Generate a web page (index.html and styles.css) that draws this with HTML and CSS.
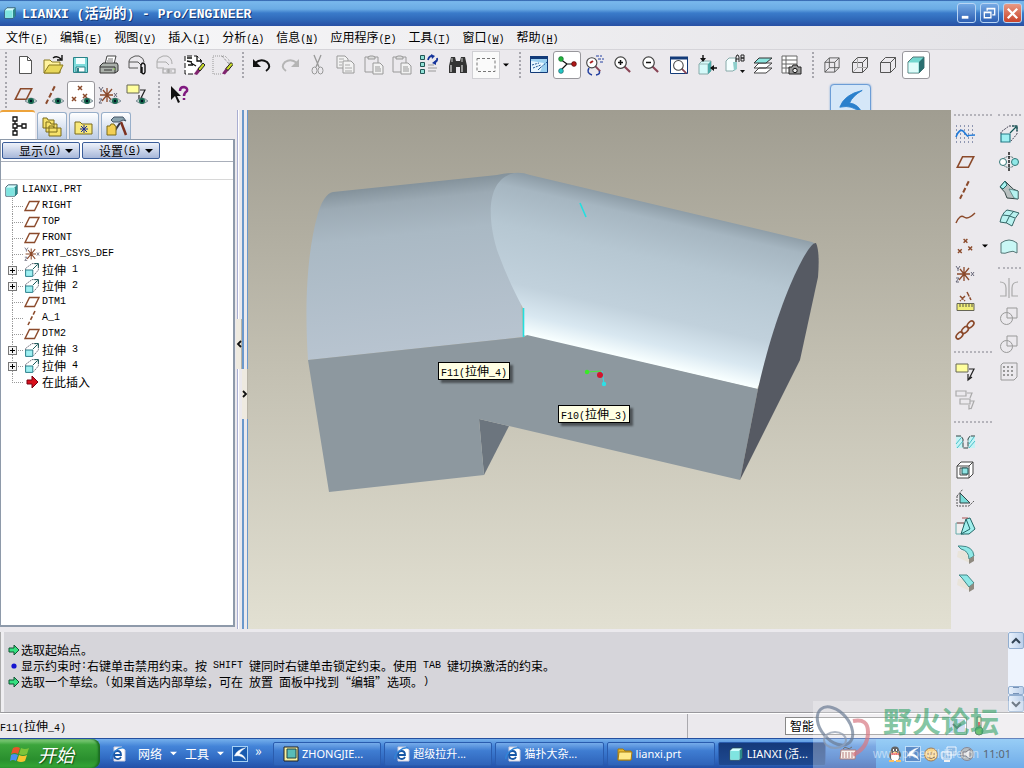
FILE: index.html
```html
<!DOCTYPE html>
<html lang="zh-CN">
<head>
    <meta charset="UTF-8">
    <meta name="viewport" content="width=device-width, initial-scale=1.0">
    <title>LIANXI (活动的) - Pro/ENGINEER</title>
    <link rel="stylesheet" href="styles.css">
</head>
<body>
    <!-- shared icons -->
    <svg class="sprite">
        <symbol id="eye" viewBox="0 0 12 8"><path d="M0 4Q6-2 12 4Q6 9 0 4z" fill="#b9cfc8" stroke="#567" stroke-width=".6"/><circle cx="6" cy="4" r="3" fill="#17694f"/><circle cx="6" cy="4" r="1.2" fill="#012"/></symbol>
        <symbol id="plane" viewBox="0 0 16 12"><path d="M5.500 1.500H15L10.500 10.500H1z" fill="none" stroke="#8b4a2b" stroke-width="1.400"/></symbol>
        <symbol id="axis" viewBox="0 0 16 16"><path d="M11 1L4 15" stroke="#8b4a2b" stroke-width="1.600" stroke-dasharray="4 2"/></symbol>
        <symbol id="points" viewBox="0 0 20 18"><path d="M8 1l4 4m0-4l-4 4M13 9l4 4m0-4l-4 4M2 12l4 4m0-4l-4 4" stroke="#8b4a2b" stroke-width="1.500"/></symbol>
        <symbol id="csys" viewBox="0 0 20 18"><path d="M2 9h13M4 15L14 3M5 4l9 11M9 2v14" stroke="#8b4a2b" stroke-width="1.300" fill="none"/><path d="M1 1l2 3 2-3M3 4v2M16 7l3 4m0-4l-3 4M1 13h3l-3 4h3" stroke="#667" fill="none"/></symbol>
        <symbol id="extrude" viewBox="0 0 20 20"><path d="M2 10V8L10 2h8v8l-6 7" fill="none" stroke="#445" stroke-dasharray="2 1"/><path d="M11 9l6-6M13 2h5v5" fill="none" stroke="#155" stroke-width="1.200"/><path d="M2 10h9v8H2z" fill="#9ff0f2" stroke="#257a86" stroke-width="1.200"/></symbol>
        <symbol id="cube" viewBox="0 0 16 16"><path d="M1 4l3-3h11v11l-3 3H1z" fill="#d4ffff" stroke="#245"/><path d="M1.500 4.500h10v10h-10z" fill="#7fe4e0"/><path d="M12 4l3-3v11l-3 3z" fill="#2b8b8b"/></symbol>
        <symbol id="tag" viewBox="0 0 20 20"><path d="M1 1h12v8H1z" fill="#ffff9d" stroke="#665"/><path d="M14 6h5l-5 10M13 11v6l4-3" fill="none" stroke="#222" stroke-width="1.200"/></symbol>
        <symbol id="box" viewBox="0 0 18 18"><path d="M1 6h11v11H1zM6 1h11v11H6zM1 6l5-5M12 6l5-5M12 17l5-5M1 17l5-5" fill="none" stroke="#555"/></symbol>
        <symbol id="glass" viewBox="0 0 20 20"><path d="M12 12l6 6" stroke="#845" stroke-width="2.200"/><circle cx="8" cy="8" r="6" fill="#fff" stroke="#444" stroke-width="1.300"/></symbol>
        <symbol id="sheet" viewBox="0 0 20 20"><path d="M1 1h8l3 3v9H1z" fill="#f2f2f2" stroke="#999"/><path d="M7 6h8l3 3v9H7z" fill="#f2f2f2" stroke="#999"/><path d="M9 10h5M9 13h7M9 16h7M3 4h5M3 7h3M3 10h3" stroke="#aaa"/></symbol>
        <symbol id="paste" viewBox="0 0 20 20"><path d="M1 2h13v15H1z" fill="none" stroke="#999"/><path d="M4 4V2l2-1h3l2 1v2z" fill="#ddd" stroke="#999"/><path d="M9 8h7l3 3v8H9z" fill="#f2f2f2" stroke="#999"/><path d="M11 12h5M11 14h6M11 16h6" stroke="#999"/></symbol>
        <symbol id="pencil" viewBox="0 0 12 12"><path d="M1 11L6 4l3 2-5 6z" fill="#80256f"/><path d="M5 6l5-6 2 2-5 6z" fill="#c9dc29" stroke="#222"/></symbol>
        <symbol id="ie" viewBox="0 0 16 16"><path d="M4 1h8l3 3v11H4z" fill="#fff" stroke="#ccd"/><path d="M4 9h7Q11 5 7.500 5T4 9q0 4 4 4 2 0 3-2" fill="none" stroke="#1757a6" stroke-width="1.800"/><path d="M1 13Q0 9 5 5t9-3" fill="none" stroke="#3184d8" stroke-width="1.400"/></symbol>
        <symbol id="swoosh" viewBox="0 0 20 20"><path d="M18 1Q5 4 2 13q5-1 8 0 4 1 8 5-2-7-9-8Q11 5 18 1z" fill="currentColor" stroke="currentColor" stroke-width=".6"/></symbol>
        <symbol id="down" viewBox="0 0 8 8"><path d="M0 2h8L4 6z" fill="currentColor"/></symbol>
    </svg>

    <div class="app">
        <header class="titlebar">
            <svg class="title-icon"><use href="#cube"/></svg>
            <h1>LIANXI (<span class="cjk">活动的</span>) - Pro/ENGINEER</h1>
            <div class="window-buttons">
                <button aria-label="最小化"><svg viewBox="0 0 18 18"><path d="M4 13h7" stroke="#fff" stroke-width="3"/></svg></button>
                <button aria-label="还原"><svg viewBox="0 0 18 18"><path d="M3.500 7.500h7v6h-7zM6.500 6V3.500h8v7H12M3 8h8M6 4h9" fill="none" stroke="#fff" stroke-width="1.400"/></svg></button>
                <button class="close" aria-label="关闭"><svg viewBox="0 0 18 18"><path d="M4 4l10 10M14 4L4 14" stroke="#fff" stroke-width="2.400"/></svg></button>
            </div>
        </header>

        <nav class="menubar">
            <button>文件<span class="en">(<u>F</u>)</span></button>
            <button>编辑<span class="en">(<u>E</u>)</span></button>
            <button>视图<span class="en">(<u>V</u>)</span></button>
            <button>插入<span class="en">(<u>I</u>)</span></button>
            <button>分析<span class="en">(<u>A</u>)</span></button>
            <button>信息<span class="en">(<u>N</u>)</span></button>
            <button>应用程序<span class="en">(<u>P</u>)</span></button>
            <button>工具<span class="en">(<u>T</u>)</span></button>
            <button>窗口<span class="en">(<u>W</u>)</span></button>
            <button>帮助<span class="en">(<u>H</u>)</span></button>
        </nav>

        <div class="toolbars">
            <div class="toolbar">
                <span class="grip"></span>
                <button class="tool" aria-label="新建"><svg viewBox="0 0 24 24"><path d="M6.500 3.500h8l4 4v13h-12z" fill="#fff" stroke="#555"/><path d="M14.500 3.500v4h4" fill="none" stroke="#555"/></svg></button>
                <button class="tool" aria-label="打开"><svg viewBox="0 0 24 24"><path d="M3 20V7h6l2 2h8v11z" fill="#fff3a0" stroke="#8a7a20"/><path d="M3 20l5-8h14l-4 8z" fill="#e8d75a" stroke="#8a7a20"/><path d="M12 5q4-3 8 1m1-4v5h-5" fill="none" stroke="#111" stroke-width="1.400"/></svg></button>
                <button class="tool" aria-label="保存"><svg viewBox="0 0 24 24"><path d="M4.500 4.500h14v15h-14z" fill="#7fdcdc" stroke="#2a8288"/><path d="M7 5h9v6H7z" fill="#f4ffff"/><path d="M7 14h9v5H7z" fill="#fff" stroke="#2a8288"/><path d="M9 15v4" stroke="#2a8288" stroke-width="2"/></svg></button>
                <button class="tool" aria-label="打印"><svg viewBox="0 0 24 24"><path d="M8 11l2-8h9l-2 8z" fill="#fff" stroke="#444"/><path d="M11 6h5M10 8h6" stroke="#777"/><path d="M3 13l3-3h14l1 2v6l-3 2H3z" fill="#aab0aa" stroke="#333"/><path d="M3 14h15v6M7 17h8" stroke="#333" fill="none"/><path d="M16 16h2" stroke="#9d5"/></svg></button>
                <button class="tool" aria-label="发送"><svg viewBox="0 0 24 24"><path d="M4 15V8q0-3 6-5h4q5 2 5 6M4 9h9l3 3M4 15h9" fill="none" stroke="#555"/><path d="M16 20V12q2-4 4 0v7q-1 3-3 1v-6" fill="none" stroke="#111" stroke-width="1.400"/></svg></button>
                <button class="tool" aria-label="发送链接"><svg viewBox="0 0 24 24"><path d="M4 15V8q0-3 6-5h4q5 2 5 8M4 9h9l3 3M4 15h7" fill="none" stroke="#aaa"/><path d="M10 16h6v4h-6zM15 16h7v4h-7zM13 18h6" fill="none" stroke="#aaa" stroke-width="1.200"/></svg></button>
                <button class="tool" aria-label="编辑文件"><svg viewBox="0 0 24 24"><path d="M12 21H4V3h12l4 4v4" fill="#fff" stroke="#111" stroke-dasharray="5 2"/><path d="M6 5h5M6 8l5 1M7 12h5M10 10l5 3M16 3v5h5" fill="none" stroke="#111" stroke-width="1.300"/><use href="#pencil" x="12" y="10" width="12" height="12"/></svg></button>
                <button class="tool" aria-label="拭除"><svg viewBox="0 0 24 24"><path d="M12 21H4V3h12l4 4v4" fill="none" stroke="#999" stroke-dasharray="1 1"/><path d="M13 3l7 8" stroke="#777" stroke-dasharray="1 1"/><use href="#pencil" x="12" y="9" width="12" height="13"/></svg></button>
                <span class="grip"></span>
                <button class="tool" aria-label="撤消"><svg viewBox="0 0 24 24"><path d="M5 10q6-5 12-1 5 5-1 9" fill="none" stroke="#111" stroke-width="2"/><path d="M3 6v8h8z" fill="#111"/></svg></button>
                <button class="tool" aria-label="重做"><svg viewBox="0 0 24 24"><path d="M19 10Q13 5 7 9q-5 5 1 9" fill="none" stroke="#b5b5b5" stroke-width="2"/><path d="M21 6v8h-8z" fill="#b5b5b5"/></svg></button>
                <button class="tool" aria-label="剪切"><svg viewBox="0 0 24 24"><path d="M8 2l5 12M15 2l-5 12" stroke="#999" stroke-width="1.300"/><ellipse cx="8.500" cy="17.500" rx="2.500" ry="3.500" fill="none" stroke="#999"/><ellipse cx="14.500" cy="17.500" rx="2.500" ry="3.500" fill="none" stroke="#999"/></svg></button>
                <button class="tool" aria-label="复制"><svg viewBox="0 0 24 24"><use href="#sheet" x="2" y="2" width="20" height="20"/></svg></button>
                <button class="tool" aria-label="粘贴"><svg viewBox="0 0 24 24"><use href="#paste" x="2" y="2" width="20" height="20"/></svg></button>
                <button class="tool" aria-label="选择性粘贴"><svg viewBox="0 0 24 24"><use href="#paste" x="2" y="2" width="20" height="20"/></svg></button>
                <button class="tool" aria-label="再生"><svg viewBox="0 0 24 24"><path d="M2.500 2.500h4v4h-4zM2.500 9.500h4v4h-4zM2.500 16.500h4v4h-4z" fill="#8fe0d6" stroke="#255"/><path d="M10 12h6M10 15h9M10 18h8" stroke="#999"/><path d="M10 7q1-4 4-4M19 5q1 3-3 5" fill="none" stroke="#15349b" stroke-width="1.800"/><path d="M13 1l4 2-3 3zM18 7l-4 3 4 2z" fill="#15349b"/></svg></button>
                <button class="tool" aria-label="查找"><svg viewBox="0 0 24 24"><path d="M5 4h4l1 4h4l1-4h4l2 9v7h-7v-6h-4v6H3v-7z" fill="#333"/><path d="M5 12v7M16 12v7" stroke="#bbb" stroke-width="1.500"/><path d="M6 5v4M16 5v4" stroke="#ccc"/></svg></button>
                <button class="tool picked" aria-label="选取"><svg viewBox="0 0 24 24"><path d="M3 5.500h18v13H3z" fill="none" stroke="#777" stroke-dasharray="3 2"/></svg></button>
                <button class="drop" aria-label="选取选项"><svg><use href="#down"/></svg></button>
                <span class="grip"></span>
                <button class="tool" aria-label="重画"><svg viewBox="0 0 24 24"><path d="M3.500 4.500h17v15h-17z" fill="#9cd0f0" stroke="#123a78"/><path d="M3 4.500h18" stroke="#123a78" stroke-width="3"/><path d="M4 8l13 2-4 9H4z" fill="#e8f6ff"/><path d="M5 12l7-2M6 15l8-3M11 17l3-3M12 16l8-7" fill="none" stroke="#225899" stroke-dasharray="2 1"/></svg></button>
                <button class="tool pressed" aria-label="旋转中心"><svg viewBox="0 0 24 24"><path d="M5 6l7 5M12 11h7M12 11l-7 7" stroke="#111" stroke-width="1.200"/><circle cx="6" cy="6" r="2.400" fill="#23b23a" stroke="#163" stroke-width=".6"/><circle cx="19" cy="11" r="2.400" fill="#b01818" stroke="#400" stroke-width=".6"/><circle cx="6" cy="18" r="2.400" fill="#25c6c6" stroke="#155" stroke-width=".6"/></svg></button>
                <button class="tool" aria-label="定向模式"><svg viewBox="0 0 24 24"><use href="#glass" x="2" y="3" width="17" height="17"/><path d="M7 10l3-2" stroke="#a22" stroke-width="2"/><path d="M13 3h6M15 6h6M17 9h4" stroke="#2440a0" stroke-dasharray="3 1"/><path d="M6 15q-3 5 3 7M13 22q5-1 3-4" fill="none" stroke="#2440a0" stroke-width="1.500"/></svg></button>
                <button class="tool" aria-label="放大"><svg viewBox="0 0 24 24"><use href="#glass" x="2" y="2" width="19" height="19"/><path d="M7 9.500h5M9.500 7v5" stroke="#111" stroke-width="1.500"/></svg></button>
                <button class="tool" aria-label="缩小"><svg viewBox="0 0 24 24"><use href="#glass" x="2" y="2" width="19" height="19"/><path d="M7 9.500h5" stroke="#111" stroke-width="1.500"/></svg></button>
                <button class="tool" aria-label="重新调整"><svg viewBox="0 0 24 24"><path d="M3.500 4.500h17v16h-17z" fill="#fff" stroke="#123a78"/><path d="M3 5h18" stroke="#123a78" stroke-width="3"/><use href="#glass" x="5" y="6" width="16" height="16"/></svg></button>
                <button class="tool" aria-label="重定向"><svg viewBox="0 0 24 24"><path d="M4 11l3-3h9v10l-3 3H4z" fill="#d5fafa" stroke="#8aa"/><path d="M4 11h9v10" fill="none" stroke="#9bb"/><path d="M13 11l3-3v10l-3 3z" fill="#4aa8a8"/><path d="M8 2v6M22 15h-6" stroke="#111" stroke-width="1.400"/><path d="M5 5h6L8 9zM19 12v6l-4-3z" fill="#111"/></svg></button>
                <button class="tool" aria-label="保存的视图"><svg viewBox="0 0 24 24"><path d="M3 8l3-3h7v10l-3 3H3z" fill="#f4ffff" stroke="#8aa"/><path d="M10 9h4v7l-3 2z" fill="#8fcfcc"/><path d="M13 9V4l1-2h1l1 2v5M13 6h3M18 2h3v3h-3zM18 5h3v3h-3z" fill="none" stroke="#222"/><path d="M17 17h5l-2.500 3z" fill="#111"/></svg></button>
                <button class="tool" aria-label="层"><svg viewBox="0 0 24 24"><path d="M3 20l5-5h13l-6 5zM3 15l5-5h13l-6 5z" fill="#fff" stroke="#444"/><path d="M3 10l5-5h13l-6 5z" fill="#8ce5df" stroke="#333"/></svg></button>
                <button class="tool" aria-label="视图管理器"><svg viewBox="0 0 24 24"><path d="M3 3h15v17H3zM3 7h15M3 11h15M3 15h15M7 3v17" fill="#fff" stroke="#666"/><path d="M10 14h3l1-2h4l1 2h3v7H10z" fill="#999" stroke="#222"/><circle cx="16" cy="17.500" r="2.200" fill="#eee" stroke="#111"/></svg></button>
                <span class="grip"></span>
                <button class="tool" aria-label="线框"><svg viewBox="0 0 24 24"><use href="#box" x="4" y="4" width="16" height="16"/></svg></button>
                <button class="tool" aria-label="隐藏线"><svg viewBox="0 0 24 24"><path d="M4.500 9.500h10v10h-10zM4.500 9.500l5-5h10v10l-5 5M14.500 9.500l5-5" fill="none" stroke="#555"/><path d="M9.500 5v9.500H19M9.500 14.500l-5 5" fill="none" stroke="#aaa"/></svg></button>
                <button class="tool" aria-label="无隐藏线"><svg viewBox="0 0 24 24"><path d="M4.500 9.500h10v10h-10zM4.500 9.500l5-5h10v10l-5 5M14.500 9.500l5-5" fill="none" stroke="#555"/></svg></button>
                <button class="tool pressed" aria-label="着色"><svg viewBox="0 0 24 24"><path d="M4 9l5-5h11v11l-5 5H4z" fill="#72d7cf" stroke="#577"/><path d="M4.500 9.500h10v10h-10z" fill="#dffcfa"/><path d="M15 9l5-5v11l-5 5z" fill="#2b6f70"/></svg></button>
            </div>
            <div class="toolbar">
                <span class="grip"></span>
                <button class="tool" aria-label="平面显示"><svg viewBox="0 0 24 24"><use href="#plane" x="1" y="4" width="19" height="14"/><use href="#eye" x="12" y="14" width="12" height="8"/></svg></button>
                <button class="tool" aria-label="轴显示"><svg viewBox="0 0 24 24"><use href="#axis" x="0" y="2" width="20" height="20"/><use href="#eye" x="11" y="14" width="12" height="8"/></svg></button>
                <button class="tool pressed" aria-label="点显示"><svg viewBox="0 0 24 24"><use href="#points" x="1" y="2" width="20" height="18"/><use href="#eye" x="12" y="14" width="12" height="8"/></svg></button>
                <button class="tool" aria-label="坐标系显示"><svg viewBox="0 0 24 24"><use href="#csys" x="1" y="2" width="20" height="20"/><use href="#eye" x="12" y="14" width="12" height="8"/></svg></button>
                <button class="tool" aria-label="注释显示"><svg viewBox="0 0 24 24"><use href="#tag" x="1" y="1" width="20" height="20"/><use href="#eye" x="11" y="14" width="12" height="8"/></svg></button>
                <span class="grip wide"></span>
                <button class="tool" aria-label="帮助"><svg viewBox="0 0 24 24"><path d="M4 3v14l4-4 3 7 2-1-3-6h4z" fill="#111"/><path d="M13 8q0-4 4-4 4 1 3 4-3 2-3 5m0 2v2" fill="none" stroke="#801a80" stroke-width="2.500"/></svg></button>
            </div>
            <div class="float-logo"><svg><use href="#swoosh"/></svg></div>
        </div>

        <main class="work">
            <aside class="side">
                <div class="tabs">
                    <button class="tab active" aria-label="模型树"><svg viewBox="0 0 24 24"><path d="M7 3h4v4H7zM7 10h4v4H7zM7 17h4v4H7zM16 10h4v4h-4zM9 7v3M9 14v3M11 12h5" fill="none" stroke="#111" stroke-width="1.300"/></svg></button>
                    <button class="tab" aria-label="文件夹浏览器"><svg viewBox="0 0 24 24"><path d="M3 14V4h4l1 2h6v8zM6 18V8h4l1 2h6v8zM9 22V12h4l1 2h7v8z" fill="#f7e26b" stroke="#7b6b1b"/></svg></button>
                    <button class="tab" aria-label="收藏夹"><svg viewBox="0 0 24 24"><path d="M3 20V8h5l2 2h10v10z" fill="#f8e97a" stroke="#7b6b1b"/><path d="M12 11v8M8 15h8M9 12l6 6M15 12l-6 6" stroke="#1b2c9a"/></svg></button>
                    <button class="tab" aria-label="连接"><svg viewBox="0 0 24 24"><path d="M7 6l3-3h9l3 4-3-1-4 2H9z" fill="#8ba3ae" stroke="#456"/><path d="M17 8l5 13" stroke="#7d3020" stroke-width="2.500"/><path d="M16 9l-6 9" stroke="#334" stroke-width="2"/><path d="M3 21v-9h3l1-2h3l1 2h1v9z" fill="#f3cf53" stroke="#7b6b1b"/></svg></button>
                </div>
                <div class="side-box">
                    <div class="side-buttons">
                        <button>显示<span class="en">(<u>O</u>)</span><svg><use href="#down"/></svg></button>
                        <button>设置<span class="en">(<u>G</u>)</span><svg><use href="#down"/></svg></button>
                    </div>
                    <div class="side-strip"></div>
                    <div class="root"><svg><use href="#cube"/></svg><span class="en">LIANXI.PRT</span></div>
                    <ul class="tree">
                        <li><svg><use href="#plane"/></svg><span class="en">RIGHT</span></li>
                        <li><svg><use href="#plane"/></svg><span class="en">TOP</span></li>
                        <li><svg><use href="#plane"/></svg><span class="en">FRONT</span></li>
                        <li><svg><use href="#csys"/></svg><span class="en">PRT_CSYS_DEF</span></li>
                        <li><button class="plus" aria-label="展开"></button><svg><use href="#extrude"/></svg>拉伸<span class="en"> 1</span></li>
                        <li><button class="plus" aria-label="展开"></button><svg><use href="#extrude"/></svg>拉伸<span class="en"> 2</span></li>
                        <li><svg><use href="#plane"/></svg><span class="en">DTM1</span></li>
                        <li><svg><use href="#axis"/></svg><span class="en">A_1</span></li>
                        <li><svg><use href="#plane"/></svg><span class="en">DTM2</span></li>
                        <li><button class="plus" aria-label="展开"></button><svg><use href="#extrude"/></svg>拉伸<span class="en"> 3</span></li>
                        <li><button class="plus" aria-label="展开"></button><svg><use href="#extrude"/></svg>拉伸<span class="en"> 4</span></li>
                        <li><svg viewBox="0 0 16 16"><path d="M3 6h5V2l6 6-6 6v-4H3z" fill="#d8101c" stroke="#701"/></svg>在此插入</li>
                    </ul>
                </div>
            </aside>

            <div class="splitter">
                <button class="fold left" aria-label="收起"><svg viewBox="0 0 6 8"><path d="M5 1L2 4l3 3" fill="none" stroke="#111" stroke-width="1.800"/></svg></button>
                <button class="fold right" aria-label="展开"><svg viewBox="0 0 6 8"><path d="M1 1l3 3-3 3" fill="none" stroke="#111" stroke-width="1.800"/></svg></button>
            </div>

            <section class="canvas">
                <svg class="model" viewBox="248 110 703 519">
                    <defs>
                        <linearGradient id="left-skin" gradientUnits="userSpaceOnUse" x1="400" y1="185" x2="418" y2="350">
                            <stop offset="0" stop-color="#84929b"/>
                            <stop offset=".1" stop-color="#9caab4"/>
                            <stop offset=".3" stop-color="#aab9c4"/>
                            <stop offset="1" stop-color="#b8c4d0"/>
                        </linearGradient>
                        <linearGradient id="right-skin" gradientUnits="userSpaceOnUse" x1="600" y1="191" x2="565" y2="343">
                            <stop offset="0" stop-color="#8c9ba5"/>
                            <stop offset=".1" stop-color="#a6b6c1"/>
                            <stop offset=".35" stop-color="#b6c7d2"/>
                            <stop offset=".7" stop-color="#c1d1dc"/>
                            <stop offset=".88" stop-color="#d9e8f1"/>
                            <stop offset="1" stop-color="#f8ffff"/>
                        </linearGradient>
                    </defs>
                    <path d="M479 419l30 7-25 49z" fill="#6c757e"/>
                    <path d="M308 360C304 300 308 250 317 217Q323 194 333 192L497 175Q505 173 514 173L523 337z" fill="url(#left-skin)"/>
                    <path d="M514 173Q522 172 530 175L812 242Q818 244 815 255L757 389 523 335V308C512 288 504 269 497 250 488 220 485 180 514 173z" fill="url(#right-skin)"/>
                    <path d="M308 360l216-23 3-2 231 54-18 91-261-61 5 56-155 17z" fill="#8d989f"/>
                    <path d="M758 389C770 335 786 292 799 266Q811 242 816 243 820 252 818 277L800 360 740 480z" fill="#565a63"/>
                    <path d="M523.500 308v29M580 203l3 7 3 7" fill="none" stroke="#24dfdf" stroke-width="1.600"/>
                    <path d="M587 372l14-1" stroke="#45e83a"/>
                    <path d="M602 371l2 13" stroke="#2de0e6"/>
                    <circle cx="587" cy="372" r="2.200" fill="#39ea27"/>
                    <circle cx="604" cy="384" r="2.200" fill="#2de0e6"/>
                    <circle cx="600" cy="375" r="3" fill="#d3142c"/>
                </svg>
                <div class="tip tip-f11"><span class="en">F11(</span>拉伸<span class="en">_4)</span></div>
                <div class="tip tip-f10"><span class="en">F10(</span>拉伸<span class="en">_3)</span></div>
            </section>

            <div class="palette">
                <div class="column">
                    <span class="grip-h"></span>
                    <button class="tool" aria-label="草绘"><svg viewBox="0 0 24 24"><path d="M3 4h18M3 8h18M3 12h18M3 16h18M3 20h18" stroke="#347" stroke-dasharray="1 3"/><path d="M3 15q4-10 8-5t4 4 7-1" fill="none" stroke="#1f79d8" stroke-width="1.600"/></svg></button>
                    <button class="tool" aria-label="平面"><svg viewBox="0 0 24 24"><use href="#plane" x="3" y="5" width="19" height="14"/></svg></button>
                    <button class="tool" aria-label="轴"><svg viewBox="0 0 24 24"><use href="#axis" x="2" y="2" width="20" height="20"/></svg></button>
                    <button class="tool" aria-label="曲线"><svg viewBox="0 0 24 24"><path d="M3 17q4-9 8-6t11-4" fill="none" stroke="#8b4a2b" stroke-width="1.500"/></svg></button>
                    <div class="tool-group">
                        <button class="tool" aria-label="点"><svg viewBox="0 0 24 24"><use href="#points" x="3" y="4" width="19" height="17"/></svg></button>
                        <button class="drop" aria-label="点选项"><svg><use href="#down"/></svg></button>
                    </div>
                    <button class="tool" aria-label="坐标系"><svg viewBox="0 0 24 24"><use href="#csys" x="2" y="2" width="20" height="20"/></svg></button>
                    <button class="tool" aria-label="分析"><svg viewBox="0 0 24 24"><path d="M7 6l5 5m0-5l-5 5M14 2l4 8" stroke="#8b4a2b" stroke-width="1.500" stroke-dasharray="5 1"/><path d="M4 13.500h17v7H4z" fill="#f1ee78" stroke="#665"/><path d="M7 14v3M10 14v3M13 14v3M16 14v3M19 14v3" stroke="#554"/></svg></button>
                    <button class="tool" aria-label="参照"><svg viewBox="0 0 24 24"><g fill="none" stroke="#8b4a2b" stroke-width="1.700"><ellipse cx="6.500" cy="17.500" rx="4" ry="2.500" transform="rotate(-45 6.500 17.500)"/><ellipse cx="12" cy="12" rx="4" ry="2.500" transform="rotate(-45 12 12)"/><ellipse cx="17.500" cy="6.500" rx="4" ry="2.500" transform="rotate(-45 17.500 6.500)"/></g></svg></button>
                    <span class="grip-h"></span>
                    <button class="tool" aria-label="注释"><svg viewBox="0 0 24 24"><use href="#tag" x="2" y="3" width="20" height="20"/></svg></button>
                    <button class="tool" aria-label="传播注释"><svg viewBox="0 0 24 24"><path d="M3 3h10v5H3zM7 11h10v5H7zM14 5h5l-2 5M17 13h4l-3 8m-2-4v4l3-1" fill="none" stroke="#aaa" stroke-width="1.200"/></svg></button>
                    <span class="grip-h"></span>
                    <button class="tool" aria-label="孔"><svg viewBox="0 0 24 24"><path d="M3 6h5l2 3v9H3zM22 6h-5l-2 3v9h7z" fill="#c4f3f5"/><path d="M3 14l5-6M4 18l6-7M16 14l5-7M16 18l6-7" stroke="#4bbfc8"/><path d="M3 6h5l2 3v9h5V9l2-3h5" fill="none" stroke="#344" stroke-dasharray="5 1"/></svg></button>
                    <button class="tool" aria-label="壳"><svg viewBox="0 0 24 24"><path d="M4 8l4-4h12v12l-4 4H4z" fill="#fff" stroke="#444"/><path d="M4 8h12v12M16 8l4-4M7 10h7v7H7z" fill="none" stroke="#444"/><path d="M9 10h6v6H9z" fill="#8fe4e4" stroke="#255"/></svg></button>
                    <button class="tool" aria-label="筋"><svg viewBox="0 0 24 24"><path d="M7 7v10h10z" fill="#78dcd8" stroke="#344"/><path d="M4 10l6-7M4 10v10h12l5-5" fill="none" stroke="#555" stroke-dasharray="2 1"/></svg></button>
                    <button class="tool" aria-label="拔模"><svg viewBox="0 0 24 24"><path d="M3 9h8v11H3z" fill="#eee" stroke="#6aa"/><path d="M8 20l5-15 4-1 5 11-6 5z" fill="#a0efed" stroke="#266"/><path d="M13 5l4 10-9 5" fill="none" stroke="#266"/><path d="M9 4h6M4 9h7" fill="none" stroke="#a55"/></svg></button>
                    <button class="tool" aria-label="倒圆角"><svg viewBox="0 0 24 24"><path d="M5 9h7l5 6v6L4 15z" fill="#e9e4da"/><path d="M8 4q12 0 13 10l-5 3q0-8-8-10l-3-3z" fill="#8fe8e7" stroke="#488"/><path d="M21 14v5l-5 3v-5z" fill="#8f8a80"/></svg></button>
                    <button class="tool" aria-label="倒角"><svg viewBox="0 0 24 24"><path d="M5 9h7l5 6v6L4 15z" fill="#e9e4da"/><path d="M6 5h8l7 8-5 4-7-9z" fill="#8fe8e7" stroke="#488"/><path d="M21 13v6l-5 3v-5z" fill="#8f8a80"/></svg></button>
                </div>
                <div class="column narrow">
                    <span class="grip-h"></span>
                    <button class="tool" aria-label="拉伸"><svg viewBox="0 0 24 24"><use href="#extrude" x="2" y="2" width="20" height="20"/></svg></button>
                    <button class="tool" aria-label="旋转"><svg viewBox="0 0 24 24"><path d="M6 9q6-5 12 0M6 15q6 5 12 0" fill="none" stroke="#466" stroke-dasharray="2 1"/><circle cx="6" cy="12" r="3.500" fill="#fff" stroke="#377"/><circle cx="18" cy="12" r="3.500" fill="#8fe8e7" stroke="#377"/><path d="M12 2v20" stroke="#111" stroke-width="1.400" stroke-dasharray="3 1"/></svg></button>
                    <button class="tool" aria-label="可变剖面扫描"><svg viewBox="0 0 24 24"><path d="M8 3l5 5q3 4 8 5v8l-11-1Q9 14 3 9z" fill="#b9c1c1" stroke="#344"/><path d="M8 3l2 4-4 4-3-2z" fill="#a8f4f2" stroke="#266"/><path d="M12 11l9 2v8l-4-1z" fill="#b5f2f0" stroke="#366" stroke-width=".6"/></svg></button>
                    <button class="tool" aria-label="边界混合"><svg viewBox="0 0 24 24"><path d="M3 16Q5 7 10 4q6 1 12 3-4 4-7 13-5-4-12-4z" fill="#b9f2f0" stroke="#366"/><path d="M9 17q3-8 8-12M6 9q6 0 12 3" fill="none" stroke="#366"/></svg></button>
                    <button class="tool" aria-label="造型"><svg viewBox="0 0 24 24"><path d="M4 9q8-6 16 0v10q-4-3-8-1t-8 1z" fill="#c9f7f5" stroke="#577"/></svg></button>
                    <span class="grip-h"></span>
                    <button class="tool" aria-label="镜像"><svg viewBox="0 0 24 24"><path d="M12 2v20M3 6q6 0 6 6v8H3M21 6q-6 0-6 6v8h6" fill="none" stroke="#aaa" stroke-width="1.200"/></svg></button>
                    <button class="tool" aria-label="合并"><svg viewBox="0 0 24 24"><path d="M10 4h10v10H10z" fill="none" stroke="#999"/><circle cx="9.500" cy="14.500" r="6" fill="none" stroke="#999"/></svg></button>
                    <button class="tool" aria-label="修剪"><svg viewBox="0 0 24 24"><path d="M10 4h10v10H10z" fill="none" stroke="#999"/><circle cx="9.500" cy="14.500" r="6" fill="none" stroke="#999"/></svg></button>
                    <button class="tool" aria-label="阵列"><svg viewBox="0 0 24 24"><path d="M4 5l2-2h14v14l-3 3H4z" fill="none" stroke="#999"/><path d="M6 7h12M6 11h12M6 15h12" stroke="#999" stroke-width="2" stroke-dasharray="2 2"/></svg></button>
                </div>
            </div>
        </main>

        <section class="messages">
            <ul>
                <li><svg viewBox="0 0 12 12"><path d="M1 4h5V1l5 5-5 5V8H1z" fill="#35e080" stroke="#153"/></svg>选取起始点。</li>
                <li><svg viewBox="0 0 12 12"><circle cx="6" cy="6" r="2.600" fill="#1515d0"/></svg>显示约束时<span class="en">:</span>右键单击禁用约束。按<span class="en"> SHIFT </span>键同时右键单击锁定约束。使用<span class="en"> TAB </span>键切换激活的约束。</li>
                <li><svg viewBox="0 0 12 12"><path d="M1 4h5V1l5 5-5 5V8H1z" fill="#35e080" stroke="#153"/></svg>选取一个草绘。<span class="en">(</span>如果首选内部草绘，可在<span class="en"> </span>放置<span class="en"> </span>面板中找到“编辑”选项。<span class="en">)</span></li>
            </ul>
            <div class="scrollbar">
                <button aria-label="向上"><svg viewBox="0 0 10 10"><path d="M1 7l4-4 4 4" fill="none" stroke="#345" stroke-width="2"/></svg></button>
                <span class="thumb"></span>
                <button aria-label="向下"><svg viewBox="0 0 10 10"><path d="M1 3l4 4 4-4" fill="none" stroke="#345" stroke-width="2"/></svg></button>
            </div>
        </section>

        <section class="status">
            <div class="status-text"><span class="en">F11(</span>拉伸<span class="en">_4)</span></div>
            <div class="filter">
                <select aria-label="过滤器"><option>智能</option></select>
                <svg class="filter-arrow" viewBox="0 0 10 10"><path d="M1 3l4 4 4-4" fill="none" stroke="#345" stroke-width="2"/></svg>
            </div>
            <svg class="thermo" viewBox="0 0 12 20"><path d="M4 1h4v11H4z" fill="#e8e8b0" stroke="#454"/><path d="M6 6v8" stroke="#c33" stroke-width="2"/><circle cx="6" cy="15" r="4" fill="#2fa53a" stroke="#153"/></svg>
        </section>

        <footer class="taskbar">
            <button class="start"><svg viewBox="0 0 20 20"><path d="M3 4q4-2 7 0L8 10Q5 8 1 10z" fill="#e8552b"/><path d="M11 4q4 2 8 0l-2 6q-4 2-8 0z" fill="#7cc43a"/><path d="M1 11q3-2 7 0l-2 6q-3-2-6 0z" fill="#4a8ff0"/><path d="M9 11q4 2 8 0l-2 6q-4 2-8 0z" fill="#f6c52f"/></svg>开始</button>
            <div class="quick">
                <svg class="quick-ie"><use href="#ie"/></svg>
                <button>网络<svg><use href="#down"/></svg></button>
                <button>工具<svg><use href="#down"/></svg></button>
                <span class="badge"><svg><use href="#swoosh"/></svg></span>
                <span class="more">»</span>
            </div>
            <div class="tasks">
                <button class="task"><svg viewBox="0 0 16 16"><path d="M1 1h14v14H1z" fill="#f6f0a0" stroke="#222"/><path d="M4 3h9v9H4z" fill="#57bdb9" stroke="#244"/></svg>ZHONGJIE...</button>
                <button class="task"><svg><use href="#ie"/></svg>超级拉升...</button>
                <button class="task"><svg><use href="#ie"/></svg>猫扑大杂...</button>
                <button class="task"><svg viewBox="0 0 16 16"><path d="M1 14V3h5l2 2h6v9z" fill="#e6b830" stroke="#a67c10"/><path d="M1 14L2 6h13l-1 8z" fill="#ffe98a" stroke="#a67c10"/></svg>lianxi.prt</button>
                <button class="task active"><svg viewBox="0 0 16 16"><use href="#cube" x="1" y="1" width="14" height="14"/></svg>LIANXI (活...</button>
            </div>
            <div class="keyboard"><svg viewBox="0 0 18 14"><path d="M2 4h15l-1 9H1z" fill="#f6efe8" stroke="#844"/><path d="M3 7h13M3 9h13M3 11h12" stroke="#944" stroke-dasharray="2 1"/><path d="M4 3q2-3 4-1t5-1" fill="none" stroke="#333"/></svg></div>
            <div class="tray">
                <svg viewBox="0 0 16 16"><ellipse cx="8" cy="9" rx="6" ry="6" fill="#222"/><ellipse cx="8" cy="11" rx="4" ry="4" fill="#fff"/><circle cx="8" cy="4.500" r="4" fill="#222"/><path d="M6 3h1v2H6zM9 3h1v2H9z" fill="#fff"/><path d="M4 7h8v2H4z" fill="#d22"/><path d="M6 6h4v1H6zM2 14h5v2H2zM9 14h5v2H9z" fill="#f7a520"/></svg>
                <span class="badge"><svg><use href="#swoosh"/></svg></span>
                <svg viewBox="0 0 16 16"><circle cx="8" cy="8.500" r="6.500" fill="#f2c25a" stroke="#754514"/><path d="M5 7v2M8 6v3M11 7v2M4 11q4 3 8 0" fill="none" stroke="#532"/></svg>
                <svg viewBox="0 0 16 16"><path d="M6 1h9v8H6zM1 6h9v7H1z" fill="#5b9bd8" stroke="#e8f3ff"/><path d="M3 15h6" stroke="#eee" stroke-width="2"/></svg>
                <svg viewBox="0 0 16 16"><circle cx="8" cy="8" r="6.500" fill="#98a2a8" stroke="#556"/><path d="M4 6h3l4-3v10L7 10H4z" fill="#ddd" stroke="#445"/></svg>
                <time>11:01</time>
            </div>
        </footer>

        <div class="watermark">
            <svg viewBox="0 0 66 60"><g fill="none"><ellipse cx="22" cy="25" rx="14" ry="22" transform="rotate(-40 22 25)" stroke="#6b7c94" stroke-width="3"/><ellipse cx="22" cy="39" rx="11" ry="8" stroke="#8d99ac" stroke-width="2"/><path d="M40 20q15-3 15 11 0 16-15 23" stroke="#d87882" stroke-width="4"/></g></svg>
            <strong>野火论坛</strong>
            <span>www.proewildfire.cn</span>
        </div>
    </div>
</body>
</html>
```
FILE: styles.css
```css
* {
    box-sizing: border-box;
}
body {
    margin: 0;
    background: #ebe9ed;
    color: #000;
    font-family: "Noto Sans CJK SC", sans-serif;
    font-size: 12px;
    line-height: 16px;
}
h1, ul {
    margin: 0;
    padding: 0;
    list-style: none;
}
button {
    margin: 0;
    padding: 0;
    border: 0;
    background: none;
    color: inherit;
    font: inherit;
}
svg {
    display: block;
    flex: none;
}
.sprite {
    display: none;
}
.en {
    font-family: "Liberation Mono", monospace;
    font-size: 10px;
    line-height: 10px;
    white-space: pre;
}
.app {
    position: relative;
    display: flex;
    flex-direction: column;
    height: 100vh;
    overflow: hidden;
}

/* title bar */
.titlebar {
    display: flex;
    align-items: center;
    height: 26px;
    flex: none;
    padding: 0 2px 0 4px;
    background: linear-gradient(#1d4c9c 0, #79b8ec 6%, #6aabe4 35%, #3a7bca 50%, #2f68b8 75%, #2850a4);
    color: #fff;
}
.title-icon {
    width: 12px;
    height: 12px;
    margin-right: 6px;
}
.titlebar h1 {
    font: bold 13px/18px "Liberation Mono", monospace;
    text-shadow: 1px 1px 0 #173a78;
}
.titlebar .cjk {
    font-family: "Noto Sans CJK SC", sans-serif;
    font-size: 14px;
}
.window-buttons {
    display: flex;
    gap: 4px;
    margin-left: auto;
}
.window-buttons button {
    width: 19px;
    height: 20px;
    border: 1px solid #b9d5f4;
    border-radius: 3px;
    background: linear-gradient(#75a9e4, #2d5fb3);
}
.window-buttons .close {
    background: linear-gradient(#e89a84, #c8432a);
}

/* menus */
.menubar {
    display: flex;
    height: 23px;
    flex: none;
    padding-bottom: 2px;
    background: linear-gradient(90deg, #f9f9fa, #e4e3e7);
}
.menubar button {
    padding: 0 6px;
}

/* toolbars */
.toolbars {
    position: relative;
    flex: none;
    border-top: 1px solid #d5d4d9;
    height: 61px;
    overflow: hidden;
}
.toolbar {
    display: flex;
    height: 30px;
    align-items: center;
}
.grip {
    width: 13px;
    height: 26px;
    padding-left: 7px;
    flex: none;
}
.grip:first-child {
    width: 11px;
    padding-left: 5px;
}
.grip.wide {
    width: 14px;
}
.grip::before {
    content: "";
    display: block;
    height: 100%;
    border-left: 2px dotted #a8a7ae;
}
.tool {
    display: flex;
    align-items: center;
    justify-content: center;
    width: 28px;
    height: 28px;
    flex: none;
}
.tool svg {
    width: 24px;
    height: 24px;
}
.pressed {
    border: 1px solid #98979c;
    border-radius: 3px;
    background: #fff;
}
.picked {
    border: 1px solid #d0d0d4;
    background: #fafafa;
}
.drop {
    width: 12px;
    height: 28px;
    flex: none;
}
.drop svg {
    width: 6px;
    height: 6px;
    margin: auto;
}
.float-logo {
    position: absolute;
    right: 153px;
    top: 34px;
    width: 41px;
    height: 36px;
    padding: 4px 6px;
    border: 1px solid #6c9dd6;
    border-radius: 4px;
    background: #d5e7f8;
    box-shadow: 0 0 2px #6c9dd6;
    color: #2a80cc;
}
.float-logo svg {
    width: 28px;
    height: 28px;
}

/* model tree */
.work {
    display: flex;
    flex: 1;
    min-height: 0;
}
.side {
    display: flex;
    flex-direction: column;
    width: 235px;
    padding-bottom: 2px;
}
.tabs {
    display: flex;
    align-items: flex-end;
    gap: 2px;
    height: 29px;
}
.tab {
    display: flex;
    align-items: center;
    justify-content: center;
    width: 30px;
    height: 27px;
    border: 1px solid #98afca;
    border-bottom: 0;
    border-radius: 3px 3px 0 0;
    background: linear-gradient(#fff, #bccce5);
}
.tab svg {
    width: 24px;
    height: 24px;
}
.tab.active {
    width: 35px;
    height: 29px;
    border: 0;
    border-top: 2px solid #eda33b;
    background: #fff;
}
.side-box {
    flex: 1;
    border: 1px solid #8e9aaa;
    border-width: 1px 2px 2px 1px;
    background: #fff;
}
.side-buttons {
    display: flex;
    gap: 2px;
    padding: 2px 1px;
    height: 22px;
    border-bottom: 1px solid #a9afba;
}
.side-buttons button {
    display: flex;
    align-items: center;
    justify-content: flex-end;
    width: 78px;
    padding-right: 6px;
    border: 1px solid #3b5d99;
    border-radius: 2px;
    background: linear-gradient(#eef2fa, #a7b7d9);
}
.side-buttons svg {
    width: 8px;
    height: 8px;
    margin-left: 4px;
}
.side-strip {
    height: 18px;
    border-bottom: 1px solid #d8d8d8;
}
.root, .tree li {
    display: flex;
    align-items: center;
    height: 16px;
    white-space: pre;
}
.root {
    margin-top: 2px;
    padding-left: 4px;
}
.root svg {
    width: 13px;
    height: 13px;
    margin-right: 4px;
}
.tree {
    margin-left: 11px;
}
.tree li {
    position: relative;
    padding-left: 12px;
}
.tree li::before {
    content: "";
    position: absolute;
    left: 0;
    top: 0;
    width: 10px;
    height: 8px;
    border-left: 1px dotted #999;
    border-bottom: 1px dotted #999;
}
.tree li:not(:last-child)::after {
    content: "";
    position: absolute;
    left: 0;
    top: 8px;
    height: 8px;
    border-left: 1px dotted #999;
}
.tree svg {
    width: 16px;
    height: 16px;
    margin-right: 2px;
}
.plus {
    position: absolute;
    z-index: 1;
    left: -4px;
    top: 4px;
    width: 9px;
    height: 9px;
    border: 1px solid #777;
    background:
        linear-gradient(#000, #000) center / 5px 1px no-repeat,
        linear-gradient(#000, #000) center / 1px 5px no-repeat,
        #f4f4f4;
}
.splitter {
    display: flex;
    width: 13px;
    padding: 209px 0 0 1px;
    background: linear-gradient(90deg, transparent 2px, #a9aed2 2px 3px, #fff 3px 4px, transparent 4px 7px, #6b98cb 7px 9px, transparent 9px 12px, #6b98cb 12px);
}
.fold {
    width: 6px;
    height: 50px;
    border-right: 1px solid #b7b3a7;
    background: #eeeae0;
}
.fold.right {
    margin-top: 50px;
}
.fold svg {
    width: 6px;
    height: 8px;
}

/* graphics window */
.canvas {
    position: relative;
    flex: 1;
    min-width: 0;
    overflow: hidden;
    background: linear-gradient(#a09d91, #c3c0b2 50%, #e2e0d2);
}
.model {
    width: 100%;
    height: 100%;
}
.tip {
    position: absolute;
    padding: 0 2px;
    border: 1px solid #000;
    background: #ffffe4;
    box-shadow: 3px 3px 2px rgba(0, 0, 0, 0.45);
    white-space: nowrap;
}
.tip-f11 {
    left: 190px;
    top: 252px;
}
.tip-f10 {
    left: 310px;
    top: 295px;
}
.palette {
    display: flex;
}
.column {
    width: 44px;
}
.column.narrow {
    width: 29px;
}
.grip-h {
    display: block;
    height: 14px;
    padding: 7px 3px 0;
}
.grip-h:first-child {
    height: 10px;
    padding-top: 4px;
}
.grip-h::before {
    content: "";
    display: block;
    border-top: 2px dotted #b5b4bb;
}
.tool-group {
    display: flex;
}

/* message log */
.messages {
    display: flex;
    flex: none;
    height: 81px;
    margin-top: 3px;
    border-bottom: 1px solid #99989d;
    border-left: 1px solid #aaa;
    background: #d6d5da;
}
.messages ul {
    flex: 1;
    padding: 10px 0 0 4px;
    border-left: 3px solid #efeef1;
}
.messages li {
    display: flex;
    align-items: center;
    height: 16px;
    white-space: pre;
}
.messages li svg {
    width: 12px;
    height: 12px;
    margin-right: 1px;
}
.scrollbar {
    display: flex;
    flex-direction: column;
    width: 16px;
    background: #edf3fd;
}
.scrollbar button, .thumb {
    display: flex;
    align-items: center;
    justify-content: center;
    height: 17px;
    border: 1px solid #92aed0;
    border-radius: 2px;
    background: linear-gradient(90deg, #e8f1fc, #bcd0ea);
}
.scrollbar svg {
    width: 10px;
    height: 10px;
}
.thumb {
    height: 9px;
    margin-top: auto;
}
.thumb::before {
    content: "";
    width: 6px;
    height: 5px;
    border: 1px solid #7893b8;
    border-width: 1px 0;
}

/* status line */
.status {
    display: flex;
    align-items: center;
    flex: none;
    height: 25px;
    border-top: 1px solid #fff;
}
.status-text {
    flex: 1;
    height: 100%;
    padding-top: 4px;
    border-right: 1px solid #aaa9ae;
}
.filter {
    position: relative;
    width: 182px;
    margin-left: 97px;
}
.filter select {
    display: block;
    width: 100%;
    height: 18px;
    padding: 0 4px;
    appearance: none;
    border: 1px solid #888;
    border-radius: 0;
    background: #fff;
    color: #000;
    font: inherit;
    line-height: 16px;
}
.filter-arrow {
    position: absolute;
    right: 2px;
    top: 2px;
    width: 16px;
    height: 14px;
    padding: 2px;
    background: #c0d2ec;
    pointer-events: none;
}
.thermo {
    width: 12px;
    height: 20px;
    margin: 0 39px 0 6px;
}

/* taskbar */
.taskbar {
    display: flex;
    flex: none;
    height: 30px;
    border-top: 1px solid #244f9f;
    background: linear-gradient(#75b0ec, #4484d8 25%, #316cc4 65%, #2350a8);
    color: #fff;
}
.start {
    display: flex;
    align-items: center;
    gap: 8px;
    width: 100px;
    padding-left: 10px;
    border-radius: 0 8px 8px 0;
    background: linear-gradient(#8ad183, #3ca53c 20%, #2a8f2e 70%, #35a835);
    box-shadow: inset -2px 0 2px #1b6a24;
    font-size: 18px;
    font-style: italic;
    text-shadow: 1px 1px 1px #154f18;
}
.start svg {
    width: 20px;
    height: 20px;
}
.quick {
    display: flex;
    align-items: center;
    width: 173px;
    padding-left: 10px;
}
.quick-ie {
    width: 16px;
    height: 16px;
    margin-right: 12px;
}
.quick button {
    display: flex;
    align-items: center;
    margin-right: 8px;
}
.quick button svg {
    width: 7px;
    height: 7px;
    margin-left: 8px;
}
.badge {
    width: 16px;
    height: 16px;
    border: 1px solid #a5d0f5;
    background: #185bb0;
}
.badge svg {
    width: 14px;
    height: 14px;
}
.more {
    height: 24px;
    margin-left: 7px;
    font-size: 14px;
}
.tasks {
    display: flex;
    gap: 3px;
    flex: 1;
    padding: 3px 0 2px;
}
.task {
    display: flex;
    align-items: center;
    gap: 3px;
    flex: 1;
    min-width: 0;
    padding-left: 9px;
    border: 1px solid #2a5cae;
    border-radius: 2px;
    background: linear-gradient(#76acea, #3f7dd2 35%, #2e63b9);
    font-family: "Noto Sans", "Noto Sans CJK SC", sans-serif;
    font-size: 11px;
    white-space: nowrap;
}
.task.active {
    background: linear-gradient(#153a7b, #1e4990);
}
.task svg, .tray > svg {
    width: 16px;
    height: 16px;
}
.keyboard {
    width: 50px;
    padding: 7px 0 0 13px;
}
.keyboard svg {
    width: 18px;
    height: 14px;
}
.tray {
    display: flex;
    align-items: center;
    gap: 2px;
    width: 148px;
    padding-left: 11px;
    background: linear-gradient(#6bb8f2, #3389df);
}
.tray time {
    margin-left: 6px;
    color: #123;
    font: 11px "Noto Sans", sans-serif;
}

/* forum mark over the corner */
.watermark {
    position: absolute;
    right: 0;
    bottom: 0;
    display: grid;
    grid-template-columns: 60px 1fr;
    width: 211px;
    height: 67px;
    background: rgba(255, 255, 255, 0.3);
    pointer-events: none;
}
.watermark svg {
    grid-row: 1 / 3;
    width: 66px;
    height: 60px;
    opacity: 0.7;
}
.watermark strong {
    padding-left: 10px;
    color: rgba(60, 165, 110, 0.65);
    font-size: 29px;
    line-height: 38px;
}
.watermark span {
    color: rgba(255, 255, 255, 0.5);
    font: 12px/20px "Liberation Sans", sans-serif;
}
```
